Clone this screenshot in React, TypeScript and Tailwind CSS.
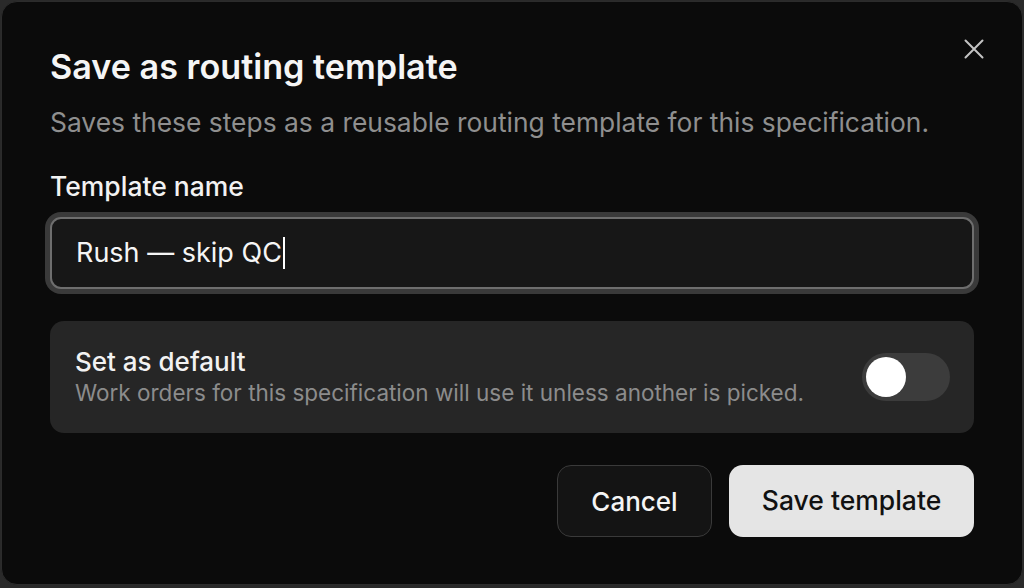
import { useState } from 'react'

export default function App() {
  const [isDefault, setIsDefault] = useState(false)
  const [name] = useState('Rush — skip QC')

  return (
    <div
      className="h-[588px] w-[1024px] overflow-hidden bg-[#2a2a2a] px-[1px] pt-[1px]"
      style={{ fontFamily: 'Inter, "Noto Sans", sans-serif' }}
    >
      <div className="relative h-[584px] rounded-[16px] border border-[#2c2c2c] bg-[#0b0b0b] px-[48px] pt-[45px]">
        <button className="absolute right-[37px] top-[36px] flex h-[22px] w-[22px] items-center justify-center text-[#c4c4c4]">
          <svg width="20" height="20" viewBox="0 0 20 20" fill="none" stroke="currentColor" strokeWidth="2" strokeLinecap="round">
            <path d="M1.5 1.5 18.5 18.5M18.5 1.5 1.5 18.5" />
          </svg>
        </button>

        <h2 className="text-[34.2px] leading-[40px] font-semibold text-[#f5f5f5]">
          Save as routing template
        </h2>
        <p className="mt-[19px] text-[26.4px] leading-[32px] text-[#8f8f8f]">
          Saves these steps as a reusable routing template for this specification.
        </p>

        <label className="mt-[32px] block text-[26.5px] leading-[32px] font-medium text-[#f2f2f2]">
          Template name
        </label>
        <div className="-mx-[5px] mt-[10px] rounded-[16px] bg-[#3a3a3a] p-[5px]">
          <div className="flex h-[72px] items-center rounded-[11px] border-2 border-[#6e6e6e] bg-[#171717] px-[24px]">
            <span className="text-[27px] leading-[32px] text-[#f5f5f5]">{name}</span>
            <span className="ml-[1px] h-[32px] w-[2px] bg-white" />
          </div>
        </div>

        <div className="mt-[27px] flex h-[112px] items-center justify-between rounded-[14px] bg-[#262626] pl-[25px] pr-[24px]">
          <div>
            <div className="text-[26px] leading-[30px] font-medium text-[#f2f2f2]">Set as default</div>
            <div className="mt-[2px] text-[22.5px] leading-[28px] text-[#8c8c8c]">
              Work orders for this specification will use it unless another is picked.
            </div>
          </div>
          <button
            onClick={() => setIsDefault(!isDefault)}
            className="flex h-[48px] w-[88px] items-center rounded-full bg-[#3c3c3c] px-[4px]"
          >
            <span className="h-[40px] w-[40px] rounded-full bg-white" />
          </button>
        </div>

        <div className="mt-[32px] flex justify-end gap-[17px]">
          <button className="h-[72px] w-[155px] rounded-[14px] border border-[#3a3a3a] bg-[#141414] text-[26px] font-medium text-[#f5f5f5]">
            Cancel
          </button>
          <button className="h-[72px] w-[245px] rounded-[14px] bg-[#e5e5e5] text-[26.5px] font-medium text-[#111111]">
            Save template
          </button>
        </div>
      </div>
    </div>
  )
}
